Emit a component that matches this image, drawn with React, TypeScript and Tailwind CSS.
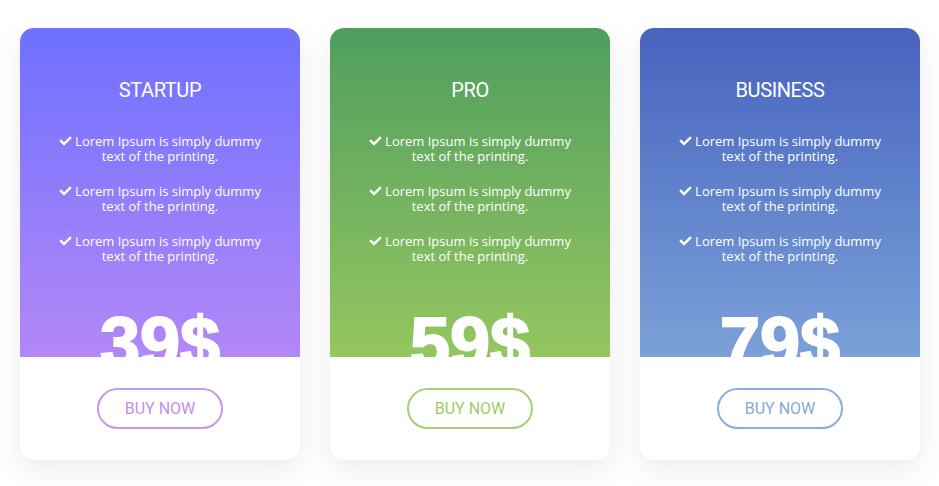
import React from "react";
import { FaCheck } from "react-icons/fa";

type Plan = {
  name: string;
  price: string;
  grad: string;
  btn: string;
};

const plans: Plan[] = [
  {
    name: "STARTUP",
    price: "39$",
    grad: "bg-gradient-to-b from-[#6e70ff] to-[#b387f6]",
    btn: "border-[#c597ee] text-[#c08fee]",
  },
  {
    name: "PRO",
    price: "59$",
    grad: "bg-gradient-to-b from-[#4e9e5e] to-[#95c660]",
    btn: "border-[#a6cf72] text-[#9ccb68]",
  },
  {
    name: "BUSINESS",
    price: "79$",
    grad: "bg-gradient-to-b from-[#4862be] to-[#7ba1d8]",
    btn: "border-[#8badd9] text-[#86a8d7]",
  },
];

function Feature() {
  return (
    <li className="text-center text-[13px] leading-[15px] text-white" style={{ fontFamily: '"Open Sans", sans-serif' }}>
      <FaCheck className="mr-[3px] inline-block h-[12px] w-[13px] align-[-1px]" />
      Lorem Ipsum is simply dummy
      <br />
      text of the printing.
    </li>
  );
}

function Card({ plan }: { plan: Plan }) {
  return (
    <div className="flex h-[432px] w-[280px] flex-col overflow-hidden rounded-[14px] bg-white shadow-[0_10px_30px_rgba(0,0,0,0.08)]">
      <div className={`flex h-[329px] flex-col items-center overflow-hidden pt-[50px] ${plan.grad}`}>
        <h2
          className="text-[20px] leading-6 tracking-[-0.4px] text-white"
          style={{ fontFamily: "Roboto, sans-serif" }}
        >
          {plan.name}
        </h2>
        <ul className="mt-[32px] flex flex-col gap-[20px]">
          <Feature />
          <Feature />
          <Feature />
        </ul>
        <div
          className="mt-auto mb-[-22px] text-[72px] leading-[72px] font-bold text-white [-webkit-text-stroke:2px_white]"
          style={{ fontFamily: '"Liberation Sans", Arial, sans-serif' }}
        >
          {plan.price}
        </div>
      </div>
      <div className="flex flex-1 items-center justify-center">
        <button
          className={`h-[41px] w-[126px] rounded-full border-2 bg-white text-[16px] ${plan.btn}`}
          style={{ fontFamily: "Roboto, sans-serif" }}
        >
          BUY NOW
        </button>
      </div>
    </div>
  );
}

export default function App() {
  return (
    <div className="h-[486px] w-[939px] bg-white">
      <div className="flex gap-[30px] pl-[20px] pt-[28px]">
        {plans.map((p) => (
          <Card key={p.name} plan={p} />
        ))}
      </div>
    </div>
  );
}
